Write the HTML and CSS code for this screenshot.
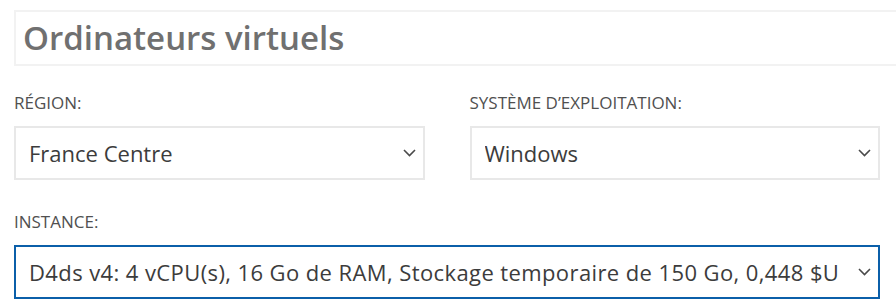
FILE: index.html
```html
<!DOCTYPE html>
<html>
<head>
	<title>Ordinateurs virtuels</title>
	<meta charset="utf-8">
	<link rel="stylesheet" href="styles.css">
</head>
<body>
	<div class="page">
		<div class="title-box">
			<h1>Ordinateurs virtuels</h1>
		</div>
		<div class="fields">
			<div class="field">
				<label>Région:</label>
				<div class="select">
					<span class="value">France Centre</span>
					<svg class="chevron" width="13" height="8" viewBox="0 0 13 8"><path d="M1 1l5.5 5.5L12 1" fill="none" stroke="#4a4a4a" stroke-width="1.6"/></svg>
				</div>
			</div>
			<div class="field">
				<label>Système d’exploitation:</label>
				<div class="select">
					<span class="value">Windows</span>
					<svg class="chevron" width="13" height="8" viewBox="0 0 13 8"><path d="M1 1l5.5 5.5L12 1" fill="none" stroke="#4a4a4a" stroke-width="1.6"/></svg>
				</div>
			</div>
			<div class="field wide">
				<label>Instance:</label>
				<div class="select focused">
					<span class="value">D4ds v4: 4 vCPU(s), 16 Go de RAM, Stockage temporaire de 150 Go, 0,448 $U</span>
					<svg class="chevron" width="13" height="8" viewBox="0 0 13 8"><path d="M1 1l5.5 5.5L12 1" fill="none" stroke="#4a4a4a" stroke-width="1.6"/></svg>
				</div>
			</div>
		</div>
	</div>
</body>
</html>
```

FILE: styles.css
```css
html, body {
	margin: 0;
	padding: 0;
	background: #FFF;
	font-family: "Open Sans", Arial, sans-serif;
}

.page {
	padding: 10px 16px 0 14px;
	overflow: hidden;
}

.title-box {
	border: 2px solid #F2F2F2;
	border-right: none;
	margin-right: -16px;
	height: 56px;
	box-sizing: border-box;
	padding-left: 7px;
}

h1 {
	margin: 0;
	font-size: 33px;
	line-height: 52px;
	font-weight: 600;
	color: #707070;
}

.fields {
	display: grid;
	grid-template-columns: 1fr 1fr;
	column-gap: 45px;
	row-gap: 32px;
	margin-top: 27px;
}

.wide {
	grid-column: span 2;
}

.field label {
	display: block;
	font-size: 17px;
	line-height: 20px;
	text-transform: uppercase;
	color: #505050;
	margin-bottom: 13px;
}

.select {
	display: flex;
	align-items: center;
	height: 54px;
	box-sizing: border-box;
	border: 2px solid #E8E8E8;
	padding: 0 7px 0 13px;
	color: #3C3C3C;
	font-size: 22px;
}

.select.focused {
	border-color: #0B5FA9;
}

.focused .value {
	letter-spacing: 0.4px;
}

.value {
	flex: 1;
	white-space: nowrap;
	overflow: hidden;
}

.chevron {
	flex: none;
	margin-left: 10px;
}
```
